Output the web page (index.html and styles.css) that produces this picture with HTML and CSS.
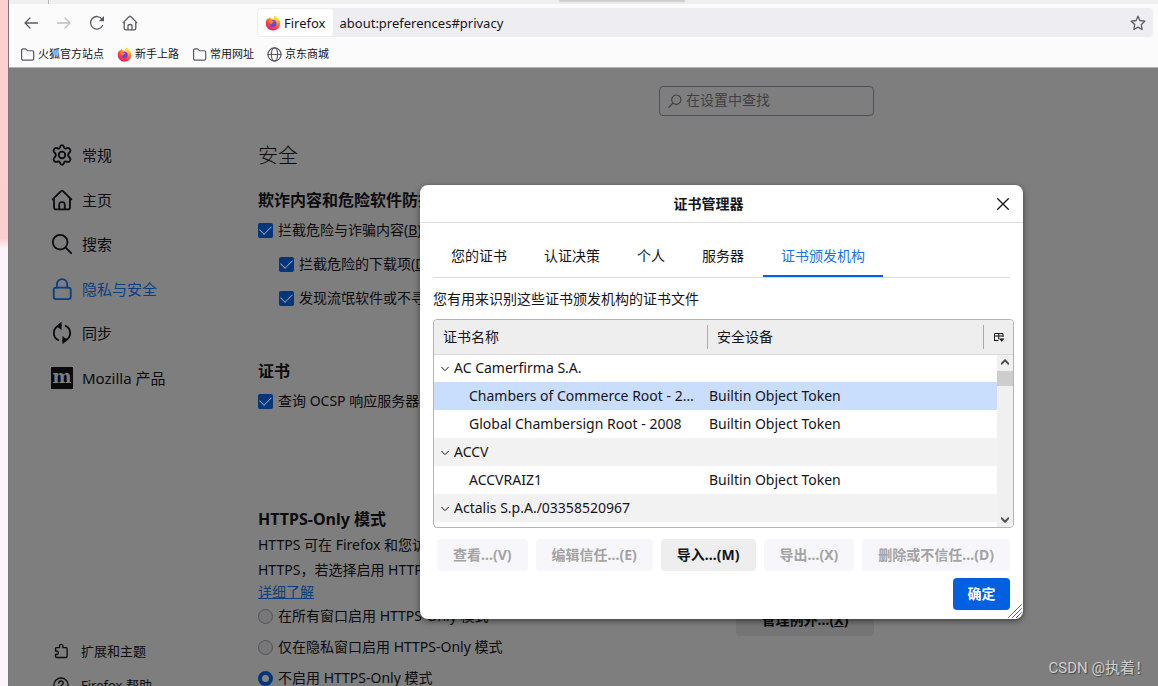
FILE: index.html
```html
<!DOCTYPE html>
<html lang="zh-CN">
<head>
<meta charset="utf-8">
<title>设置</title>
<link rel="stylesheet" href="styles.css">
</head>
<body>
<svg class="defs" aria-hidden="true">
  <defs>
    <radialGradient id="flame" cx="0.75" cy="0.1" r="1">
      <stop offset="0" stop-color="#fff04a"/><stop offset="0.4" stop-color="#ffa01e"/>
      <stop offset="0.7" stop-color="#ff4a3a"/><stop offset="1" stop-color="#e5127c"/>
    </radialGradient>
    <symbol id="firefox" viewBox="0 0 16 16">
      <path fill="url(#flame)" d="M10 .6c2 1.200 2.300 2.400 3.200 3.200 1.300 1.200 2 2.700 2 4.600A7.200 7.200 0 0 1 .8 8.400c0-2 .6-3.600 1.600-5 .1.600.2.900.500 1.200C3.300 3.500 4 2.700 5 2.200c0 .6.200 1 .6 1.400 1.500-.1 2.600.1 3.500.6C8.700 2.800 9 1.500 10 .6Z"/>
      <circle cx="8" cy="8.600" r="3.500" fill="#7a3fe0"/>
      <path fill="#ff8a22" d="M3.600 5.600c1.300-.9 2.600-.7 3.600.2.500.4 1.200.5 1.800.6-.3 1-1.300 1.100-2 1.500-.5.3-.6.900-.3 1.400-1.700-.2-2.900-1.600-3.100-3.700Z"/>
    </symbol>
    <symbol id="folder" viewBox="0 0 16 16">
      <path d="M1.700 12.500v-9q0-1.500 1.500-1.500h2.500q.6 0 1 .5l1 1.100q.4.400 1 .4h4.400q1.500 0 1.500 1.500v7q0 1.500-1.500 1.500H3.200q-1.500 0-1.500-1.500Z"/>
    </symbol>
    <symbol id="home" viewBox="0 0 16 16">
      <path d="M1.200 7.600 7.300 1.500q.7-.6 1.400 0l6.100 6.100M2.200 6.800v6.400q0 1.600 1.600 1.600h8.400q1.600 0 1.600-1.600V6.800M6 14.600v-3.500q0-1.600 2-1.600t2 1.600v3.500"/>
    </symbol>
  </defs>
</svg>
<div class="desktop"></div>
<div class="window">
  <header class="chrome">
    <div class="tabstrip"><span class="hint"></span></div>
    <div class="navbar">
      <div class="nav-buttons">
        <button aria-label="后退"><svg viewBox="0 0 16 16"><path d="M14.500 8H2M7 3 2 8l5 5"/></svg></button>
        <button aria-label="前进" disabled><svg viewBox="0 0 16 16"><path d="M1.500 8H14M9 3l5 5-5 5"/></svg></button>
        <button aria-label="刷新"><svg viewBox="0 0 16 16"><path d="M13.600 10.500A6.300 6.300 0 1 1 12.900 4"/><path class="solid" d="M15 1v5.200H9.800Z"/></svg></button>
        <button aria-label="主页"><svg viewBox="0 0 16 16"><use href="#home"/></svg></button>
      </div>
      <div class="urlbar">
        <span class="identity"><svg class="logo"><use href="#firefox"/></svg>Firefox</span>
        <input class="url" aria-label="地址" value="about:preferences#privacy">
        <button aria-label="收藏"><svg viewBox="0 0 16 16"><path d="M8 1.200 9.900 5.500l4.900.7-3.500 3.300.8 5-4.100-2.400-4.100 2.400.8-5L1.200 6.200l4.900-.7Z"/></svg></button>
      </div>
    </div>
    <nav class="bookmarks">
      <a href="#"><svg><use href="#folder"/></svg>火狐官方站点</a>
      <a href="#"><svg class="logo"><use href="#firefox"/></svg>新手上路</a>
      <a href="#"><svg><use href="#folder"/></svg>常用网址</a>
      <a href="#"><svg viewBox="0 0 16 16"><circle cx="8" cy="8" r="7"/><ellipse cx="8" cy="8" rx="3.300" ry="7"/><path d="M1 8h14"/></svg>京东商城</a>
    </nav>
  </header>

  <div class="page">
    <aside class="sidebar">
      <nav class="categories">
        <a href="#"><svg viewBox="0 0 24 24"><path d="M9.800 3.600q.5-2.300 2.200-2.300t2.200 2.300q.4 1.600 1.900 1.400l1.700-.6q1.700-.5 2.900 1.400t-.2 3.200l-1.200 1.200q-1.200 1.800 0 3.600l1.200 1.200q1.400 1.300.2 3.200t-2.900 1.400l-1.700-.6q-1.500-.2-1.900 1.400-.5 2.300-2.200 2.300t-2.200-2.300q-.4-1.600-1.900-1.400l-1.700.6q-1.700.5-2.900-1.400t.2-3.200l1.200-1.200q1.200-1.800 0-3.600L3.500 9q-1.400-1.300-.2-3.200t2.900-1.400l1.700.6q1.500.2 1.900-1.400Z"/><circle cx="12" cy="12" r="3.600"/></svg>常规</a>
        <a href="#"><svg viewBox="0 0 16 16" class="fine"><use href="#home"/></svg>主页</a>
        <a href="#"><svg viewBox="0 0 24 24"><circle cx="10" cy="10" r="8"/><path d="m16 16 6 6"/></svg>搜索</a>
        <a href="#" class="current"><svg viewBox="0 0 24 24"><rect x="3" y="10.500" width="18.500" height="12.500" rx="2.500"/><path d="M6.500 10.500V6.800a5.600 5.600 0 0 1 11.200 0v3.700"/></svg>隐私与安全</a>
        <a href="#"><svg viewBox="0 0 24 24"><path d="M8 19.700A8.600 8.600 0 0 1 8 4.200l3-.5M16 4.300a8.600 8.600 0 0 1 0 15.500l-3 .5"/><path class="solid" d="M11.500-.2v9L5.800 4.300ZM12.500 15.200v9l5.700-4.500Z"/></svg>同步</a>
        <a href="#"><span class="moz" aria-hidden="true">m</span>Mozilla 产品</a>
      </nav>
      <nav class="support">
        <a href="#"><svg viewBox="0 0 16 16"><path d="M2.500 8V5.700q0-1 1-1h3V3.200q0-1.900 1.700-1.900t1.700 1.900v1.500h3.200q1 0 1 1v7.600q0 1.200-1.200 1.200H3.700q-1.200 0-1.200-1.200V11.500h1.200q1.700 0 1.700-1.700T3.700 8Z"/></svg>扩展和主题</a>
        <a href="#"><svg viewBox="0 0 16 16"><circle cx="8" cy="8" r="7"/><path d="M5.700 6.200q.2-2.200 2.300-2.200t2.300 2q0 1.300-1.300 1.900-1 .5-1 1.800M8 11.200v1.300"/></svg>Firefox 帮助</a>
      </nav>
    </aside>

    <main class="prefs">
      <label class="search">
        <svg viewBox="0 0 16 16"><circle cx="9.500" cy="6.500" r="5.300"/><path d="m5.700 10.300-4.700 5"/></svg>
        <input type="text" placeholder="在设置中查找" aria-label="在设置中查找">
      </label>
      <h1>安全</h1>
      <section class="phishing">
        <h2>欺诈内容和危险软件防护</h2>
        <label class="option"><input type="checkbox" checked><span>拦截危险与诈骗内容(<u>B</u>)</span></label>
        <label class="option nested"><input type="checkbox" checked><span>拦截危险的下载项(<u>D</u>)</span></label>
        <label class="option nested"><input type="checkbox" checked><span>发现流氓软件或不寻常</span></label>
      </section>
      <section class="certs">
        <h2>证书</h2>
        <label class="option"><input type="checkbox" checked><span>查询 OCSP 响应服务器</span></label>
      </section>
      <section class="https">
        <h2>HTTPS-Only 模式</h2>
        <p>HTTPS 可在 Firefox 和您访<br>HTTPS，若选择启用 HTTPS</p>
        <a class="more" href="#">详细了解</a>
        <div class="choices">
          <div class="radios">
            <label class="option"><input type="radio" name="https"><span>在所有窗口启用 HTTPS-Only 模式</span></label>
            <label class="option"><input type="radio" name="https"><span>仅在隐私窗口启用 HTTPS-Only 模式</span></label>
            <label class="option"><input type="radio" name="https" checked><span>不启用 HTTPS-Only 模式</span></label>
          </div>
          <button class="exceptions">管理例外…(<u>X</u>)</button>
        </div>
      </section>
    </main>
    <span class="watermark">CSDN @执着！</span>
  </div>
</div>

<div class="dialog" role="dialog" aria-labelledby="dialog-title">
  <div class="titlebar">
    <h3 id="dialog-title">证书管理器</h3>
    <button class="close" aria-label="关闭"><svg viewBox="0 0 12 12"><path d="m.7.7 10.600 10.600M11.300.7.7 11.300"/></svg></button>
  </div>
  <div class="dialog-body">
    <div class="tabs" role="tablist">
      <button role="tab">您的证书</button>
      <button role="tab">认证决策</button>
      <button role="tab">个人</button>
      <button role="tab">服务器</button>
      <button role="tab" aria-selected="true">证书颁发机构</button>
    </div>
    <p class="about">您有用来识别这些证书颁发机构的证书文件</p>
    <div class="tree">
      <table>
        <colgroup><col class="col-name"><col><col class="col-picker"></colgroup>
        <thead>
          <tr><th scope="col"><span>证书名称</span></th><th scope="col"><span>安全设备</span></th>
          <th><button class="picker" aria-label="选择列"><svg viewBox="0 0 12 12"><path d="M1.500 9.500V2.500h8.500v3M1.500 5H10M5.700 2.500V8M1.500 9.500h3.500"/><path class="solid" d="M6 7.500h5.500L8.700 10.800Z"/></svg></button></th></tr>
        </thead>
        <tbody>
          <tr><td class="group" colspan="3"><svg viewBox="0 0 8 8"><path d="m.7 2.300 3.300 3.400 3.300-3.400"/></svg>AC Camerfirma S.A.</td></tr>
          <tr class="selected"><td class="cert">Chambers of Commerce Root - 2008</td><td colspan="2">Builtin Object Token</td></tr>
          <tr><td class="cert">Global Chambersign Root - 2008</td><td colspan="2">Builtin Object Token</td></tr>
          <tr class="shade"><td class="group" colspan="3"><svg viewBox="0 0 8 8"><path d="m.7 2.300 3.300 3.400 3.300-3.400"/></svg>ACCV</td></tr>
          <tr><td class="cert">ACCVRAIZ1</td><td colspan="2">Builtin Object Token</td></tr>
          <tr class="shade"><td class="group" colspan="3"><svg viewBox="0 0 8 8"><path d="m.7 2.300 3.300 3.400 3.300-3.400"/></svg>Actalis S.p.A./03358520967</td></tr>
        </tbody>
      </table>
      <div class="scrollbar">
        <svg viewBox="0 0 8 8"><path d="m.5 5.800 3.500-3.600 3.500 3.600"/></svg>
        <span class="thumb"></span>
        <svg viewBox="0 0 8 8"><path d="m.5 2.200 3.500 3.600 3.500-3.600"/></svg>
      </div>
    </div>
    <div class="actions">
      <button disabled>查看…(V)</button>
      <button disabled>编辑信任…(E)</button>
      <button>导入…(M)</button>
      <button disabled>导出…(X)</button>
      <button disabled>删除或不信任…(D)</button>
    </div>
    <div class="confirm"><button>确定</button></div>
  </div>
  <svg class="grip" viewBox="0 0 14 14"><path d="M.5 13.500l13-13M4.500 13.500l9-9M8.500 13.500l5-5"/></svg>
</div>
</body>
</html>
```
FILE: styles.css
```css
* { box-sizing: border-box; }
body {
  margin: 0;
  height: 100vh;
  display: flex;
  overflow: hidden;
  position: relative;
  font: 14px/24px "Noto Sans", "Noto Sans CJK SC", sans-serif;
  color: #15141a;
}
h1, h2, h3, p { margin: 0; }
a { color: inherit; text-decoration: none; }
button, input { font: inherit; color: inherit; }
button { border: 0; padding: 0; background: none; }
svg { display: block; flex: none; fill: none; stroke: currentColor; stroke-width: 1.300; stroke-linecap: round; stroke-linejoin: round; }
.solid { fill: currentColor; stroke: none; }
.logo { stroke: none; }
.defs { position: absolute; width: 0; height: 0; }

.desktop { width: 8px; flex: none; background: linear-gradient(#fdd0d0 0, #fccfcf 238px, #fdf3fa 248px); }
.window { flex: 1; min-width: 0; display: flex; flex-direction: column; border-left: 1px solid #777; }

/* Browser toolbars */
.chrome { background: #fbfbfb; border-bottom: 1px solid #b4b4b4; color: #5b5b66; }
.tabstrip { height: 4px; background: #f0f0f0; position: relative; }
.tabstrip::before { content: ""; position: absolute; left: 39px; width: 1px; height: 4px; background: #b5b5b5; }
.hint { position: absolute; left: 551px; top: 0; width: 124px; height: 1px; background: #ccc; box-shadow: 0 0 2px 1px #ccc; }
.navbar { display: flex; align-items: center; padding: 4px 5px 0 14px; }
.nav-buttons { width: 234px; flex: none; display: flex; gap: 17px; }
.nav-buttons svg, .urlbar button svg { width: 16px; height: 16px; }
.nav-buttons button:disabled { color: #c0c0c4; }
.urlbar { flex: 1; height: 29px; padding: 1px; display: flex; align-items: center; background: #eeedf2; border-radius: 4px; }
.identity { height: 27px; padding: 0 7px; display: flex; align-items: center; gap: 3px; background: #fff; border-radius: 3px; color: #15141a; font-size: 13px; }
.identity svg { width: 16px; height: 16px; }
.url { flex: 1; min-width: 0; border: 0; padding: 0 7px; background: none; font-size: 13px; color: #15141a; }
.urlbar button { padding-right: 6px; }
.bookmarks { height: 30px; padding: 4px 0 0 11px; display: flex; gap: 13px; align-items: center; font-size: 11px; color: #15141a; }
.bookmarks a { display: flex; align-items: center; gap: 3px; }
.bookmarks svg { width: 15px; height: 15px; color: #5b5b66; }

/* Dimmed preferences page */
.page { flex: 1; min-height: 0; display: flex; position: relative; overflow: hidden; background: #7e7e7e; color: #0b0a0d; }
.sidebar { width: 249px; flex: none; padding: 65px 0 0 42px; }
.categories { height: 267px; display: grid; grid-auto-rows: 1fr; font-size: 15px; }
.categories a, .support a { display: flex; align-items: center; }
.categories a { gap: 9px; }
.categories svg { width: 22px; height: 22px; stroke-width: 2; overflow: visible; }
.categories .fine { stroke-width: 1.300; }
.categories .current { color: #0b3f82; }
.moz { width: 22px; height: 22px; background: #0b0a0d; color: #7e7e7e; font: bold 18px/20px "DejaVu Serif", serif; text-align: center; }
.support { margin-top: 234px; font-size: 13px; }
.support a { height: 34px; gap: 12px; }
.support svg { width: 16px; height: 16px; margin-left: 2px; }

.prefs { width: 616px; flex: none; padding-top: 18px; white-space: nowrap; }
.search { width: 215px; height: 30px; margin-left: auto; padding: 0 8px; display: flex; align-items: center; gap: 4px; border: 1px solid #505055; border-radius: 4px; color: #3f3f44; }
.search svg { width: 14px; height: 14px; }
.search input { flex: 1; min-width: 0; height: 24px; border: 0; padding: 0 0 2px; background: none; }
.search input::placeholder { color: #3f3f44; opacity: 1; }
h1 { margin-top: 26px; font-size: 20px; line-height: 28px; font-weight: 300; }
h2 { font-size: 16px; line-height: 24px; }
.phishing, .certs { display: flex; flex-direction: column; }
.phishing { margin-top: 18px; gap: 10px; }
.certs { margin-top: 49px; gap: 6px; }
.phishing h2 { margin-bottom: -4px; }
.https { margin-top: 94px; }
.option { height: 24px; display: flex; align-items: center; gap: 5px; }
.nested { padding-left: 21px; }
.option input { appearance: none; flex: none; width: 15px; height: 15px; margin: 0; border-radius: 2px; }
.option input[type="checkbox"] { display: grid; place-items: center; background: #01367a; }
.option input[type="checkbox"]::before { content: ""; width: 10px; height: 6px; margin-bottom: 3px; border: solid #8f9fb5; border-width: 0 0 1px 1px; transform: rotate(-45deg); }
.option input[type="radio"] { border: 1px solid #55555a; border-radius: 50%; background: #777; }
.option input[type="radio"]:checked { border: 4px solid #01367a; background: #858585; }
.https p { padding-top: 1px; line-height: 25px; }
.more { display: block; width: max-content; line-height: 20px; color: #0b3f82; text-decoration: underline; }
.choices { margin-top: 2px; display: flex; justify-content: space-between; align-items: flex-start; }
.radios { display: grid; gap: 7px; }
.exceptions { width: 138px; height: 32px; border-radius: 4px; background: #757575; font-weight: 700; }
.watermark { position: absolute; right: 8px; bottom: 6px; font: 15px/24px Roboto, "Noto Sans CJK SC", sans-serif; color: #cfcfcf; text-shadow: 1px 1px 1px #444; }

/* Certificate manager */
.dialog { position: absolute; left: 420px; top: 185px; width: 603px; background: #fff; border-radius: 8px; box-shadow: 0 2px 6px rgba(0, 0, 0, 0.5); }
.titlebar { height: 38px; display: grid; grid-template-columns: 40px 1fr 40px; align-items: center; border-bottom: 1px solid #ddd; }
h3 { grid-column: 2; padding-right: 26px; font-size: 14px; line-height: 24px; text-align: center; }
.close { display: grid; place-items: center; }
.close svg { width: 12px; height: 12px; }
.dialog-body { padding: 13px 9px 9px 13px; }
.tabs { margin-right: 4px; height: 42px; display: flex; gap: 1px; border-bottom: 1px solid #ddd; }
.tabs button { padding: 0 18px; border-bottom: 2px solid transparent; }
.tabs [aria-selected] { color: #1a73e0; border-color: #0061e0; }
.about { padding: 9px 0 8px; }
.tree { height: 209px; position: relative; overflow: hidden; border: 1px solid #b4b4b4; border-radius: 4px; }
table { width: 100%; table-layout: fixed; border-collapse: collapse; }
.col-name { width: 273px; }
.col-picker { width: 30px; }
thead { background: #eee; }
th { height: 34px; padding: 0; border-bottom: 1px solid #d9d9d9; font-weight: 400; text-align: left; }
th > * { display: block; height: 24px; padding-left: 9px; }
th + th > * { border-left: 1px solid #aaa; }
.picker { width: 100%; height: 24px; display: flex; align-items: center; }
.picker svg { width: 12px; height: 12px; stroke-width: 1; }
td { height: 28px; padding: 0 0 0 2px; overflow: hidden; white-space: nowrap; text-overflow: ellipsis; }
.group svg { display: inline-block; width: 8px; height: 8px; margin: 0 5px; stroke-width: 1; }
td.cert { padding: 0 8px 0 35px; }
.shade { background: #f2f2f2; }
.selected { background: #c9defc; }
.scrollbar { position: absolute; top: 35px; right: 0; bottom: 0; width: 16px; padding: 3px 0; display: flex; flex-direction: column; align-items: center; background: #f0f0f0; color: #505050; }
.scrollbar svg { width: 8px; height: 8px; stroke-width: 2; }
.thumb { width: 16px; height: 15px; margin: 5px 0 auto; background: #cdcdcd; }
.actions { margin: 11px 4px 0; display: flex; gap: 8px; }
.actions button { flex: 1 1 auto; height: 32px; border-radius: 4px; background: #eee; font-weight: 700; }
.actions button:disabled { background: #f7f7fb; color: #a3a3a3; }
.confirm { margin: 7px 4px 0; display: flex; justify-content: flex-end; }
.confirm button { width: 57px; height: 32px; border-radius: 4px; background: #0061e0; color: #fff; font-weight: 700; }
.grip { position: absolute; right: 1px; bottom: 1px; width: 14px; height: 14px; color: #666; stroke-width: 1; }
```
